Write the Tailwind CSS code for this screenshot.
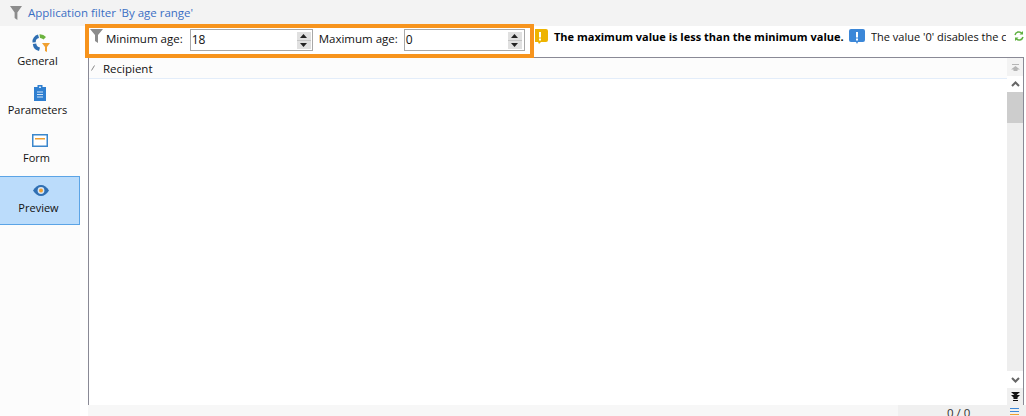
<!DOCTYPE html>
<html lang="en">
<head>
    <meta charset="UTF-8">
    <title>Application filter</title>
    <script src="https://cdn.jsdelivr.net/npm/@tailwindcss/browser@4"></script>
</head>
<body class="bg-white">
    <div class="w-[1026px] h-[416px] overflow-hidden flex flex-col font-['Open_Sans','Noto_Sans',sans-serif] text-[11.5px] leading-[16px] text-black">
        <!-- title bar -->
        <div class="h-[26px] bg-[#f3f3f3] flex items-center pl-[10px] shrink-0">
            <svg width="12" height="14" viewBox="0 0 13 15"><path d="M0 0h13L8 7v8L5 13V7z" fill="#8c8c8c"/></svg>
            <span class="ml-[6px] text-[#3a6fc4]">Application filter 'By age range'</span>
        </div>

        <div class="flex flex-1 min-h-0">
            <!-- sidebar -->
            <div class="w-[80px] shrink-0 bg-[#fcfcfc] flex flex-col text-[11px] text-[#111]">
                <div class="h-[49px] mt-[8px] flex flex-col items-center">
                    <svg width="18" height="18" viewBox="0 0 18 18" class="ml-[2px]">
                        <path d="M6 0.500A7.500 7.500 0 0 0 0.500 8.500L3.800 8.200A4 4 0 0 1 7 4z" fill="#2f6fb3"/>
                        <path d="M7.500 0.200A8 8 0 0 1 14 3L11.500 5.500A4.500 4.500 0 0 0 8 4z" fill="#6cb33f"/>
                        <path d="M0.800 10A8 8 0 0 0 7 17L8 13.500A4.500 4.500 0 0 1 4.200 9.500z" fill="#2f6fb3"/>
                        <path d="M10 9h8l-3 4v5l-2-1v-4z" fill="#f0a030"/>
                    </svg>
                    <span class="mt-[1px] -ml-[5px]">General</span>
                </div>
                <div class="h-[49px] flex flex-col items-center">
                    <svg width="12" height="16" viewBox="0 0 12 16" class="mt-[2px]">
                        <path d="M0 2h3.500V0h5v2H12v14H0z" fill="#2f7fd0"/>
                        <path d="M5 1.500h2v1.500H5zM3 6.500h6v1H3zM3 9h6v1H3zM3 11.500h6v1H3z" fill="#cfe3f7"/>
                    </svg>
                    <span class="mt-[1px] -ml-[5px]">Parameters</span>
                </div>
                <div class="h-[44px] flex flex-col items-center">
                    <svg width="16" height="13" viewBox="0 0 16 13" class="mt-[2px]">
                        <rect x="0.750" y="0.750" width="14.500" height="11.500" fill="#fff" stroke="#3b87cc" stroke-width="1.500"/>
                        <rect x="3" y="4" width="10" height="1.500" fill="#f0a030"/>
                    </svg>
                    <span class="mt-[3px] -ml-[7px]">Form</span>
                </div>
                <div class="h-[49px] bg-[#bbdcfb] border border-l-0 border-[#5ba4e6] flex flex-col items-center">
                    <svg width="16" height="11" viewBox="0 0 16 11" class="mt-[8px] ml-[3px]">
                        <path d="M0 5.500C2 2 5 0 8 0s6 2 8 5.500C14 9 11 11 8 11S2 9 0 5.500z" fill="#2f6fb3"/>
                        <circle cx="8" cy="5.500" r="3.400" fill="#d5e6f7"/>
                        <circle cx="8" cy="5.500" r="2" fill="#f0a030"/>
                    </svg>
                    <span class="mt-[4px] -ml-[2px]">Preview</span>
                </div>
            </div>

            <div class="flex-1 min-w-0 flex flex-col pl-[8px] pr-[2px]">
                <!-- toolbar -->
                <div class="h-[31px] shrink-0 flex items-start relative z-10">
                    <div class="-ml-[3px] -mt-[2px] w-[449px] h-[34px] border-4 border-[#f7941d] bg-white flex items-start pt-[1px] shrink-0 text-[#111]">
                        <svg width="13" height="14" viewBox="0 0 13 14" class="ml-[1px] shrink-0"><path d="M0 0h13L8 6v8L5 12V6z" fill="#8c8c8c"/></svg>
                        <span class="ml-[3px] mt-[2px]">Minimum age:</span>
                        <div class="ml-[7px] w-[123px] h-[22px] border border-[#a8a8a8] flex items-center justify-between pl-[1px] pr-[1px]">
                            <span class="text-[12px] -mt-[1px]">18</span>
                            <div class="flex flex-col gap-[1px] bg-[#c4c4c4]">
                                <div class="w-[14px] h-[8px] bg-[#e0e0e0] flex items-center justify-center"><svg width="7" height="4" viewBox="0 0 7 4"><path d="M3.500 0L7 4H0z" fill="#222"/></svg></div>
                                <div class="w-[14px] h-[8px] bg-[#e0e0e0] flex items-center justify-center"><svg width="7" height="4" viewBox="0 0 7 4"><path d="M3.500 4L7 0H0z" fill="#222"/></svg></div>
                            </div>
                        </div>
                        <span class="ml-[6px] mt-[2px]">Maximum age:</span>
                        <div class="ml-[6px] w-[121px] h-[22px] border border-[#a8a8a8] flex items-center justify-between pl-[1px] pr-[2px]">
                            <span class="text-[12px] -mt-[1px]">0</span>
                            <div class="flex flex-col gap-[1px] bg-[#c4c4c4]">
                                <div class="w-[14px] h-[8px] bg-[#e0e0e0] flex items-center justify-center"><svg width="7" height="4" viewBox="0 0 7 4"><path d="M3.500 0L7 4H0z" fill="#222"/></svg></div>
                                <div class="w-[14px] h-[8px] bg-[#e0e0e0] flex items-center justify-center"><svg width="7" height="4" viewBox="0 0 7 4"><path d="M3.500 4L7 0H0z" fill="#222"/></svg></div>
                            </div>
                        </div>
                    </div>
                    <div class="flex items-start min-w-0 flex-1 mt-[3px] text-[#111]">
                        <svg width="13" height="15" viewBox="3 0 13 15" class="ml-[1px] shrink-0"><path d="M2 0h12a2 2 0 0 1 2 2v9a2 2 0 0 1-2 2H9l-2 2-1-2H2a2 2 0 0 1-2-2V2a2 2 0 0 1 2-2z" fill="#eeb400"/><path d="M7 3h2v5.500H7zM7 9.500h2v2H7z" fill="#fff"/></svg>
                        <span class="ml-[6px] w-[289px] text-[11px] font-bold whitespace-nowrap text-black shrink-0">The maximum value is less than the minimum value.</span>
                        <svg width="16" height="15" viewBox="0 0 16 15" class="ml-[6px] shrink-0"><path d="M2 0h12a2 2 0 0 1 2 2v9a2 2 0 0 1-2 2H9l-1 2-1-2H2a2 2 0 0 1-2-2V2a2 2 0 0 1 2-2z" fill="#3b87d8"/><path d="M7 3h2v5.500H7zM7 9.500h2v2H7z" fill="#fff"/></svg>
                        <span class="ml-[6px] w-[135px] text-[11px] overflow-hidden whitespace-nowrap shrink-0">The value '0' disables the control</span>
                        <svg width="10" height="10" viewBox="0 0 10 10" class="ml-[8px] mt-[2px] shrink-0"><path d="M1 4a4 4 0 0 1 7-1.500M9 6a4 4 0 0 1-7 1.500" fill="none" stroke="#5fb040" stroke-width="1.500"/><path d="M9 0v3.500H5.500zM1 10V6.500h3.500z" fill="#5fb040"/></svg>
                    </div>
                </div>

                <!-- list -->
                <div class="flex-1 min-h-0 border-l border-t border-r border-[#8a8a96] flex">
                    <div class="flex-1 min-w-0 flex flex-col">
                        <div class="h-[21px] shrink-0 bg-[#fcfcfc] border-b border-[#e3edfa] flex items-center pl-[2px] text-[#111]">
                            <svg width="4" height="6" viewBox="0 0 4 6"><path d="M0.500 5.500L3.500 0.500" stroke="#888" stroke-width="1"/></svg>
                            <span class="ml-[8px] mt-[2px]">Recipient</span>
                        </div>
                        <div class="flex-1"></div>
                    </div>
                    <div class="w-[16px] shrink-0 bg-[#eeeeee] flex flex-col items-center">
                        <div class="h-[18px] w-full bg-[#f3f3f3] flex items-center justify-center"><svg width="9" height="7" viewBox="0 0 9 7"><path d="M1 0h7v1H1zM4.500 2L9 5.500H6.500V7h-4V5.500H0z" fill="#b5b5b5"/></svg></div>
                        <div class="h-[16px] w-full bg-white flex items-center justify-center"><svg width="9" height="6" viewBox="0 0 9 6"><path d="M1 5l3.500-3.500L8 5" fill="none" stroke="#666" stroke-width="2"/></svg></div>
                        <div class="h-[31px] w-full bg-[#cdcdcd]"></div>
                        <div class="flex-1"></div>
                        <div class="h-[17px] w-full bg-white flex items-center justify-center"><svg width="9" height="6" viewBox="0 0 9 6"><path d="M1 1l3.500 3.500L8 1" fill="none" stroke="#666" stroke-width="2"/></svg></div>
                        <div class="h-[17px] w-full bg-[#f0f0f0] flex items-center justify-center"><svg width="9" height="9" viewBox="0 0 9 9"><path d="M0 0h9L4.500 4zM0 3h9L6.500 5.500v1.500h-4V5.500zM2 8h5v1H2z" fill="#111"/></svg></div>
                    </div>
                </div>

                <!-- status bar -->
                <div class="h-[11px] shrink-0 bg-[#f7f7f7] flex overflow-hidden -mr-[2px]">
                    <div class="flex-1"></div>
                    <div class="w-[128px] bg-[#f0f0f0] flex justify-between pl-[49px] pr-[7px]">
                        <span class="text-[#333]">0 / 0</span>
                        <div class="flex flex-col gap-[2px] mt-[3px]">
                            <div class="w-[9px] h-[1px] bg-[#3b87d8]"></div>
                            <div class="w-[9px] h-[1px] bg-[#3b87d8]"></div>
                            <div class="w-[9px] h-[1px] bg-[#f0a030]"></div>
                        </div>
                    </div>
                </div>
            </div>
        </div>
    </div>
</body>
</html>
